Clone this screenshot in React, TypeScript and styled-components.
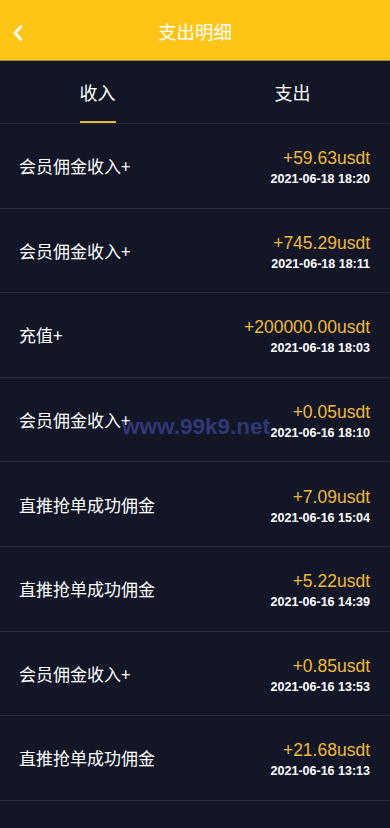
import styled, { createGlobalStyle } from 'styled-components';

interface Record {
    title: string,
    amount: string,
    time: string
}

const records: Record[] = [
    {title: '会员佣金收入+', amount: '+59.63usdt', time: '2021-06-18 18:20'},
    {title: '会员佣金收入+', amount: '+745.29usdt', time: '2021-06-18 18:11'},
    {title: '充值+', amount: '+200000.00usdt', time: '2021-06-18 18:03'},
    {title: '会员佣金收入+', amount: '+0.05usdt', time: '2021-06-16 18:10'},
    {title: '直推抢单成功佣金', amount: '+7.09usdt', time: '2021-06-16 15:04'},
    {title: '直推抢单成功佣金', amount: '+5.22usdt', time: '2021-06-16 14:39'},
    {title: '会员佣金收入+', amount: '+0.85usdt', time: '2021-06-16 13:53'},
    {title: '直推抢单成功佣金', amount: '+21.68usdt', time: '2021-06-16 13:13'},
    {title: '会员佣金收入+', amount: '+3.17usdt', time: '2021-06-16 12:40'},
]

const GlobalStyle = createGlobalStyle`
    html, body {
        margin: 0;
        padding: 0;
        background: #121627;
    }
    body {
        font-family: "Noto Sans CJK SC", "Liberation Sans", sans-serif;
    }
`

const App = () => {
    return (
        <>
            <GlobalStyle />
            <Page>
                <Header>
                    <BackButton>
                        <svg width="12" height="16" viewBox="0 0 12 16">
                            <path d="M9 1.5 L3 8 L9 14.5" fill="none" stroke="#fff" strokeWidth="2.6" strokeLinecap="round" strokeLinejoin="round" />
                        </svg>
                    </BackButton>
                    <Title>支出明细</Title>
                </Header>
                <Tabs>
                    <Tab $active>收入</Tab>
                    <Tab>支出</Tab>
                </Tabs>
                <List>
                    {records.map((r, i) => (
                        <Row key={i}>
                            <RowTitle>{r.title}</RowTitle>
                            <RightCol>
                                <Amount>{r.amount}</Amount>
                                <Time>{r.time}</Time>
                            </RightCol>
                        </Row>
                    ))}
                </List>
                <Watermark>www.99k9.net</Watermark>
            </Page>
        </>
    )
}

const Page = styled.div`
    position: relative;
    width: 390px;
    height: 828px;
    overflow: hidden;
    background: #121627;
`

const Header = styled.div`
    position: relative;
    height: 60px;
    background: #fec516;
    border-bottom: 1px solid #a68a3a;
    display: flex;
    align-items: center;
    justify-content: center;
`

const BackButton = styled.div`
    position: absolute;
    left: 12px;
    top: 25px;
    display: flex;
`

const Title = styled.div`
    color: #fff;
    font-size: 18.5px;
    line-height: 1;
    margin-top: 2px;
`

const Tabs = styled.div`
    display: flex;
    height: 62px;
    border-bottom: 1px solid #262a3a;
`

const Tab = styled.div<{ $active?: boolean }>`
    flex: 1;
    display: flex;
    align-items: center;
    justify-content: center;
    color: #fff;
    font-size: 18px;
    position: relative;

    &::after {
        content: '';
        display: ${p => p.$active ? 'block' : 'none'};
        position: absolute;
        bottom: 0;
        left: 50%;
        transform: translateX(-50%);
        width: 36px;
        height: 2px;
        background: #e6b628;
    }
`

const List = styled.div`
    display: flex;
    flex-direction: column;
`

const Row = styled.div`
    height: 83.6px;
    flex-shrink: 0;
    border-bottom: 1px solid #2a2e3d;
    display: flex;
    align-items: center;
    justify-content: space-between;
    padding: 0 20px 0 19px;
`

const RowTitle = styled.div`
    color: #fff;
    font-size: 17px;
`

const RightCol = styled.div`
    display: flex;
    flex-direction: column;
    align-items: flex-end;
    margin-top: 4px;
`

const Amount = styled.div`
    color: #f0b83a;
    font-family: "Liberation Sans", sans-serif;
    font-size: 17.5px;
    line-height: 20px;
`

const Time = styled.div`
    color: #fff;
    font-family: "Liberation Sans", sans-serif;
    font-size: 12.5px;
    font-weight: bold;
    line-height: 16px;
    margin-top: 3px;
`

const Watermark = styled.div`
    position: absolute;
    left: 122px;
    top: 414px;
    color: rgba(72, 78, 175, 0.6);
    font-family: "Liberation Sans", sans-serif;
    font-weight: bold;
    font-size: 22.5px;
    pointer-events: none;
`

export default App;
